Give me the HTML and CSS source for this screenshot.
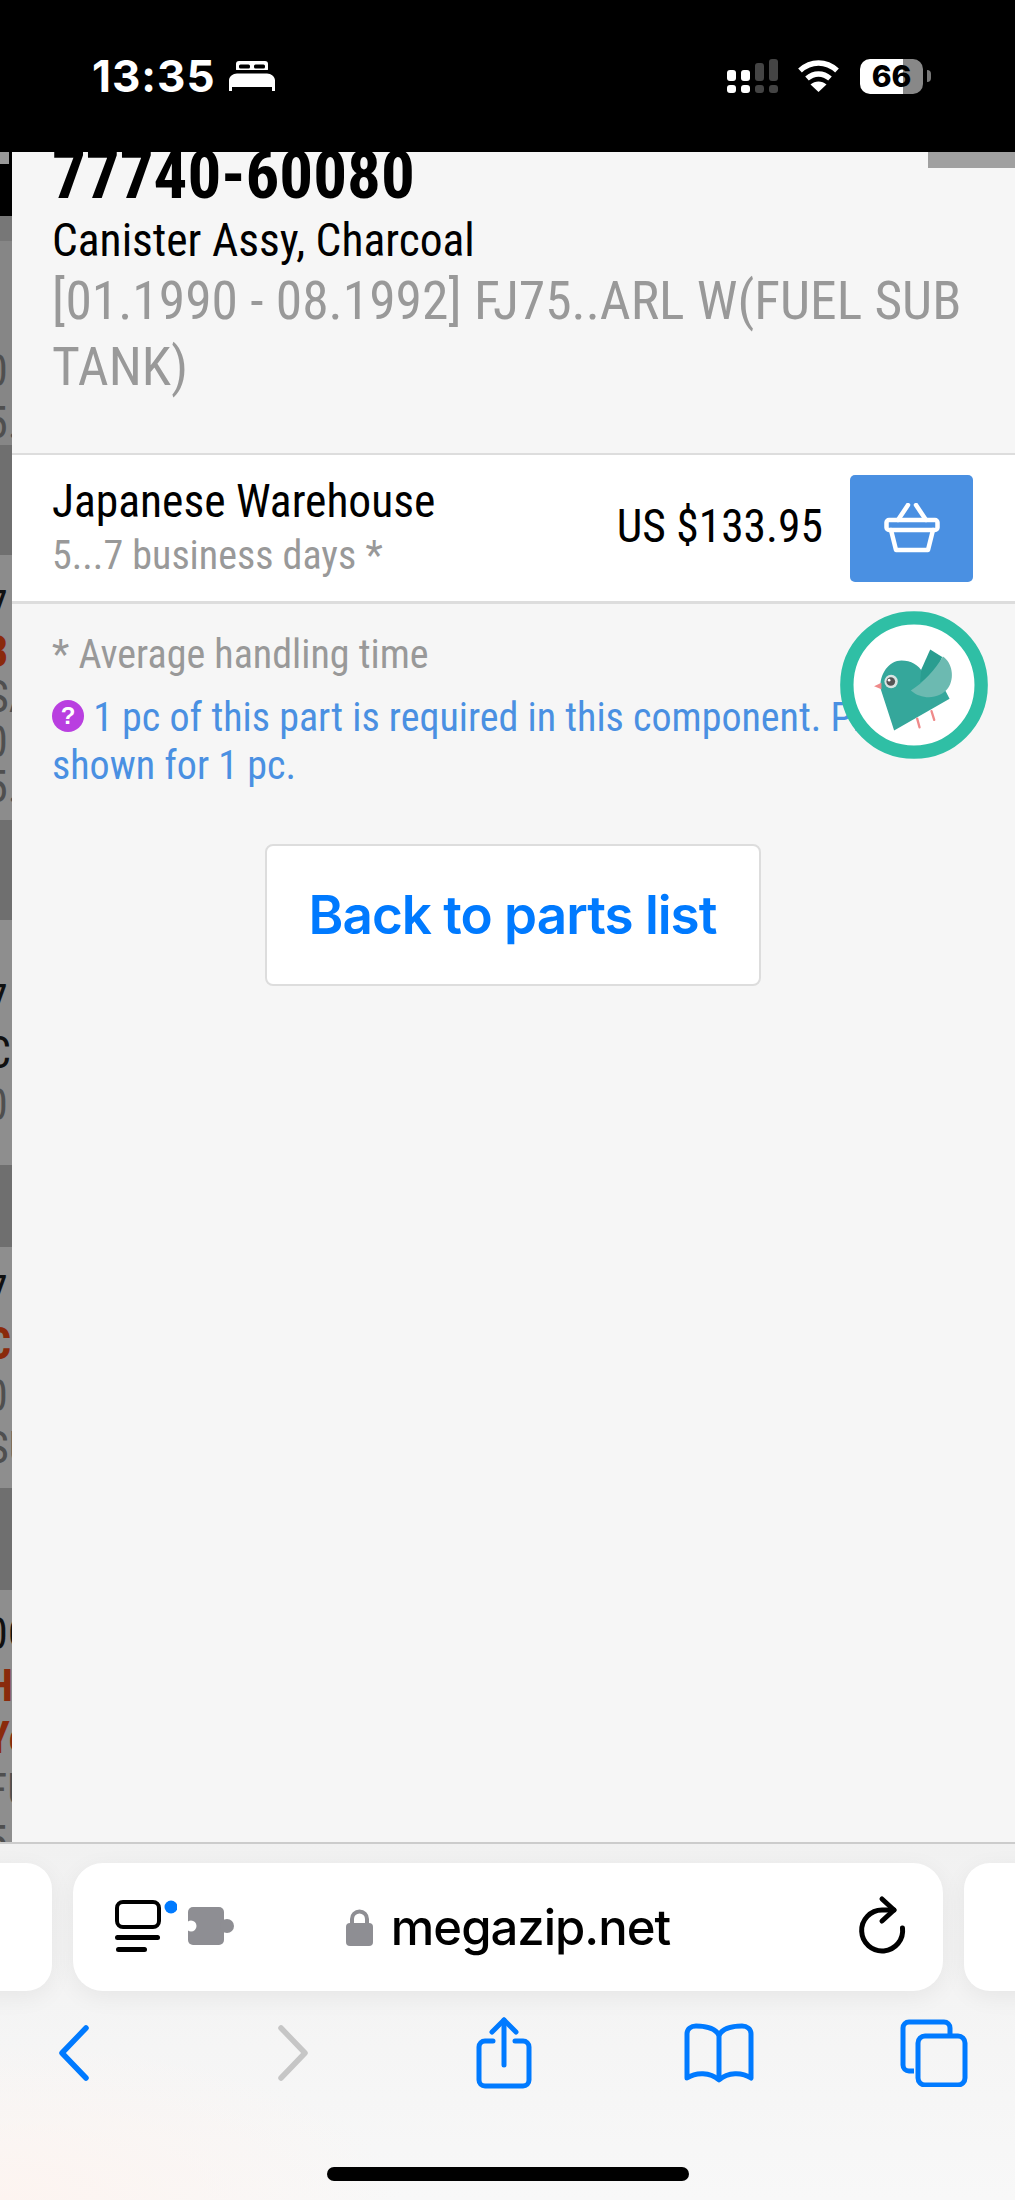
FILE: index.html
```html
<!DOCTYPE html>
<html>
<head>
  <title>megazip.net</title>
  <meta name="viewport" content="width=device-width, initial-scale=1">
  <link rel="stylesheet" href="styles.css">
</head>
<body>
  <div class="phone">
    <div class="status">
      <div class="status-left">
        <span class="clock">13:35</span>
        <svg class="bed" width="46" height="30" viewBox="0 0 46 30">
          <rect x="7" y="0" width="32" height="11" rx="3" fill="#fff"/>
          <rect x="10" y="3.500" width="11" height="4" rx="1.500" fill="#000"/>
          <rect x="25" y="3.500" width="11" height="4" rx="1.500" fill="#000"/>
          <path fill="#000" d="M7 9h32v4H7z"/>
          <path fill="#fff" d="M8 12.500h30c4 0 8 3 8 7V30h-3v-4H3v4H0V19.500c0-4 4-7 8-7z"/>
        </svg>
      </div>
      <div class="status-right">
        <svg width="52" height="36" viewBox="0 0 52 36">
          <rect x="0" y="12" width="9" height="11" rx="3" fill="#fff"/>
          <rect x="14" y="12" width="9" height="11" rx="3" fill="#fff"/>
          <rect x="28" y="5" width="9" height="18" rx="3" fill="#444"/>
          <rect x="42" y="1" width="9" height="22" rx="3" fill="#444"/>
          <rect x="0" y="27" width="9" height="8" rx="3" fill="#fff"/>
          <rect x="14" y="27" width="9" height="8" rx="3" fill="#fff"/>
          <rect x="28" y="27" width="9" height="8" rx="3" fill="#444"/>
          <rect x="42" y="27" width="9" height="8" rx="3" fill="#444"/>
        </svg>
        <svg class="wifi" width="43" height="34" viewBox="0 0 43 34">
          <path fill="none" stroke="#fff" stroke-width="5.5" d="M3 11.500C14 1.500 29 1.500 40 11.500"/>
          <path fill="none" stroke="#fff" stroke-width="5.500" d="M10 19.500C17 13.500 26 13.500 33 19.500"/>
          <path fill="#fff" d="M21.500 33L13.500 25.500C18 21.500 25 21.500 29.500 25.500z"/>
        </svg>
        <div class="battery"><span class="battery-level">66</span></div>
        <span class="battery-nib"></span>
      </div>
    </div>

    <div class="middle">
      <div class="behind">
        <div class="behind-top"><span class="behind-chip"></span></div>
        <div class="behind-row behind-row-a">
          <div class="bit bit-grey">0</div>
          <div class="bit bit-grey">5.</div>
        </div>
        <div class="behind-band behind-band-a"></div>
        <div class="behind-row behind-row-b">
          <div class="bit">7</div>
          <div class="bit bit-red">3</div>
          <div class="bit bit-grey">SA</div>
          <div class="bit bit-grey">0</div>
          <div class="bit bit-grey">5.</div>
        </div>
        <div class="behind-band behind-band-b"></div>
        <div class="behind-row behind-row-c">
          <div class="bit">7</div>
          <div class="bit">C</div>
          <div class="bit bit-grey">0</div>
        </div>
        <div class="behind-band behind-band-c"></div>
        <div class="behind-row behind-row-d">
          <div class="bit">7</div>
          <div class="bit bit-red">C</div>
          <div class="bit bit-grey">0</div>
          <div class="bit bit-grey">SU</div>
        </div>
        <div class="behind-band behind-band-d"></div>
        <div class="behind-row behind-row-e">
          <div class="bit">0C</div>
          <div class="bit bit-red">H</div>
          <div class="bit bit-red">Ye</div>
          <div class="bit bit-grey">FU</div>
          <div class="bit bit-grey">5</div>
        </div>
      </div>

      <div class="panel">
        <span class="panel-close"></span>
        <div class="part">
          <div class="part-number">77740-60080</div>
          <div class="part-name">Canister Assy, Charcoal</div>
          <div class="part-spec">[01.1990 - 08.1992] FJ75..ARL W(FUEL SUB TANK)</div>
        </div>
        <div class="offer">
          <div class="offer-info">
            <div class="offer-place">Japanese Warehouse</div>
            <div class="offer-time">5...7 business days *</div>
          </div>
          <div class="offer-price">US $133.95</div>
          <button class="offer-buy">
            <svg width="56" height="50" viewBox="0 0 56 50" fill="none" stroke="#fff" stroke-width="4.500" stroke-linejoin="round" stroke-linecap="round">
              <path d="M14 17L24 2M42 17L32 2"/>
              <rect x="2.500" y="17" width="51" height="10" rx="2.500"/>
              <path d="M7 27L12 47H44L49 27"/>
            </svg>
          </button>
        </div>
        <div class="notes">
          <div class="notes-time">* Average handling time</div>
          <div class="notes-qty">
            <svg class="notes-icon" width="32" height="32" viewBox="0 0 32 32">
              <circle cx="16" cy="16" r="16" fill="#b93fe0"/>
              <text x="16" y="24" text-anchor="middle" class="notes-mark">?</text>
            </svg>
            1 pc of this part is required in this component. Price is shown for 1 pc.
          </div>
        </div>
        <div class="back-wrap">
          <a class="back-button">Back to parts list</a>
        </div>
      </div>

      <svg class="bird" width="148" height="148" viewBox="60 62 443 443">
        <circle cx="281.500" cy="283.500" r="201" fill="#fff" stroke="#2fbfa5" stroke-width="40"/>
        <path fill="#35a79b" d="M222 420L182 296C176 250 208 210 244 210C272 210 296 224 308 246L370 290L388 325z"/>
        <path fill="#2a9d90" d="M303 238L330 177L366 200L345 250L300 275z"/>
        <path fill="#6cbab1" d="M272 300C310 276 346 236 368 198C396 216 404 262 384 292C360 326 306 330 272 300z"/>
        <circle cx="213" cy="273" r="20" fill="#d9e4e2"/>
        <circle cx="212" cy="273" r="13" fill="#555"/>
        <circle cx="207" cy="269" r="4" fill="#fff"/>
        <path fill="#ef8a8a" d="M162 287L184 277L184 296z"/>
        <path fill="none" stroke="#ef8a8a" stroke-width="7" stroke-linecap="round" d="M291 384L298 410M334 362L342 388"/>
      </svg>
    </div>

    <div class="browser">
      <div class="tabs">
        <div class="tab-peek"></div>
        <div class="address">
          <div class="address-left">
            <svg width="62" height="54" viewBox="0 0 62 54" class="reader">
              <rect x="2" y="2" width="42" height="25" rx="6" fill="none" stroke="#000" stroke-width="4"/>
              <rect x="0" y="35" width="45" height="5" rx="2.500"/>
              <rect x="1" y="47" width="31" height="5" rx="2.500"/>
              <circle cx="56" cy="7" r="6.500" fill="#007aff"/>
            </svg>
            <svg width="46" height="38" viewBox="0 0 46 38" class="puzzle">
              <rect width="36" height="38" rx="5" fill="#8e8e93"/>
              <circle cx="39" cy="19" r="7" fill="#8e8e93"/>
              <circle cx="3" cy="19" r="5.500" fill="#fff"/>
            </svg>
          </div>
          <div class="address-url">
            <svg width="27" height="38" viewBox="0 0 27 38">
              <path fill="none" stroke="#8e8e93" stroke-width="4" d="M6 17V11a7.500 7.500 0 0 1 15 0V17"/>
              <rect y="15" width="27" height="23" rx="4" fill="#8e8e93"/>
            </svg>
            <span class="url-text">megazip.net</span>
          </div>
          <div class="address-right">
            <svg class="reload" width="75" height="75" viewBox="0 0 75 75" fill="none" stroke="#000" stroke-width="5" stroke-linecap="round" stroke-linejoin="round">
              <path d="M56.500 43A20.500 20.500 0 1 1 36 25H48"/>
              <path d="M36 14L48 25L36 36"/>
            </svg>
          </div>
        </div>
        <div class="tab-peek"></div>
      </div>
      <div class="toolbar">
        <svg width="32" height="56" viewBox="0 0 32 56" fill="none" stroke="#007aff" stroke-width="5.500" stroke-linecap="round" stroke-linejoin="round">
          <path d="M28 3L4 28L28 53"/>
        </svg>
        <svg class="toolbar-forward" width="32" height="56" viewBox="0 0 32 56" fill="none" stroke="#c6c6c6" stroke-width="5.500" stroke-linecap="round" stroke-linejoin="round">
          <path d="M4 3L28 28L4 53"/>
        </svg>
        <svg width="56" height="72" viewBox="0 0 56 72" fill="none" stroke="#007aff" stroke-width="5" stroke-linecap="round" stroke-linejoin="round">
          <path d="M17 24H9a6 6 0 0 0-6 6V63a6 6 0 0 0 6 6H47a6 6 0 0 0 6-6V30a6 6 0 0 0-6-6H39"/>
          <path d="M28 48V3"/>
          <path d="M16 15L28 3L40 15"/>
        </svg>
        <svg width="70" height="60" viewBox="0 0 70 60" fill="none" stroke="#007aff" stroke-width="5" stroke-linejoin="round">
          <path d="M35 12C31 5 22 3 12 3C7 3 3 6 3 11V55C12 49 26 49 35 57C44 49 58 49 67 55V11C67 6 63 3 58 3C48 3 39 5 35 12z"/>
          <path d="M35 12V55"/>
        </svg>
        <svg width="68" height="68" viewBox="0 0 68 68" fill="none" stroke="#007aff" stroke-width="5" stroke-linejoin="round">
          <path d="M14 52H9a6 6 0 0 1-6-6V9a6 6 0 0 1 6-6H44a6 6 0 0 1 6 6V16"/>
          <rect x="18" y="17" width="47" height="49" rx="7"/>
        </svg>
      </div>
      <div class="home-bar"></div>
    </div>
  </div>
</body>
</html>
```

FILE: styles.css
```css
* {
  box-sizing: border-box;
  margin: 0;
  padding: 0;
}
body {
  font-family: "Roboto Condensed", "Liberation Sans Narrow", Roboto, sans-serif;
  font-stretch: condensed;
  background: #000;
  color: #000;
}
.phone {
  width: 1015px;
  height: 2200px;
  display: flex;
  flex-direction: column;
  overflow: hidden;
}

/* status bar */
.status {
  height: 152px;
  flex: none;
  background: #000;
  display: flex;
  justify-content: space-between;
  align-items: center;
  padding: 0 84px 0 92px;
}
.status-left {
  display: flex;
  align-items: center;
  gap: 13px;
}
.clock {
  font-family: Inter, sans-serif;
  font-stretch: normal;
  font-weight: 700;
  font-size: 44px;
  line-height: 1;
  letter-spacing: 1px;
  color: #fff;
}
.status-right {
  display: flex;
  align-items: center;
}
.wifi {
  margin-left: 18px;
}
.battery {
  width: 63px;
  height: 35px;
  margin-left: 20px;
  border-radius: 10px;
  background: linear-gradient(90deg, #fff 0, #fff 68%, #888 68%, #888 100%);
  display: flex;
  align-items: center;
  justify-content: center;
}
.battery-level {
  font-family: Inter, sans-serif;
  font-stretch: normal;
  font-weight: 800;
  font-size: 30px;
  color: #000;
}
.battery-nib {
  width: 4px;
  height: 12px;
  margin-left: 4px;
  background: #777;
  border-radius: 0 6px 6px 0;
}

/* page behind the sheet */
.middle {
  height: 1690px;
  flex: none;
  display: flex;
  position: relative;
}
.behind {
  width: 12px;
  flex: none;
  overflow: hidden;
  display: flex;
  flex-direction: column;
  background: #8a8a8a;
}
.behind-top {
  height: 64px;
  flex: none;
  background: #000;
}
.behind-chip {
  display: block;
  width: 9px;
  height: 12px;
  background: #999;
}
.behind-row {
  flex: none;
  display: flex;
  flex-direction: column;
}
.behind-band {
  flex: none;
  background: #6f6f6f;
}
.behind-row-a { height: 229px; padding-top: 129px; background: linear-gradient(#777 0, #777 25px, #868686 25px); }
.behind-band-a { height: 110px; }
.behind-row-b { height: 265px; padding-top: 30px; background: #8c8c8c; }
.behind-row-b .bit { height: 45px; line-height: 45px; }
.behind-band-b { height: 100px; }
.behind-row-c { height: 245px; padding-top: 55px; background: #8e8e8e; }
.behind-band-c { height: 82px; }
.behind-row-d { height: 241px; padding-top: 19px; background: #8e8e8e; }
.behind-band-d { height: 102px; }
.behind-row-e { flex: 1; padding-top: 18px; background: #8e8e8e; }
.bit {
  height: 52px;
  line-height: 52px;
  font-size: 44px;
  white-space: nowrap;
  color: #111;
  text-indent: -14px;
}
.bit-grey {
  color: #4f4f4f;
}
.bit-red {
  color: #8a2a0c;
  font-weight: 700;
}

/* sheet */
.panel {
  flex: 1;
  background: #f6f6f6;
  position: relative;
  overflow: hidden;
}
.panel-close {
  position: absolute;
  top: 0;
  right: 0;
  width: 87px;
  height: 16px;
  background: #a0a0a0;
}
.part {
  display: flow-root;
  height: 303px;
  padding: 0 40px;
  border-bottom: 2px solid #ddd;
}
.part-number {
  font-size: 67px;
  font-weight: 700;
  line-height: 70px;
  margin-top: -12px;
}
.part-name {
  font-size: 45.500px;
  line-height: 56px;
  margin-top: 3px;
}
.part-spec {
  font-size: 53.500px;
  line-height: 66px;
  margin-top: -1px;
  color: #999;
}
.offer {
  height: 149px;
  background: #fff;
  border-bottom: 3px solid #ddd;
  display: flex;
  align-items: center;
  padding: 0 42px 0 40px;
}
.offer-info {
  flex: 1;
}
.offer-place {
  font-size: 45.500px;
  line-height: 50px;
}
.offer-time {
  font-size: 40px;
  line-height: 48px;
  margin-top: 5px;
  color: #999;
}
.offer-price {
  font-size: 45.500px;
  margin-right: 27px;
  padding-bottom: 3px;
}
.offer-buy {
  width: 123px;
  height: 107px;
  border: 0;
  border-radius: 5px;
  background: #4a90e2;
  display: flex;
  align-items: center;
  justify-content: center;
}
.notes {
  padding: 27px 40px 0;
}
.notes-time {
  font-size: 40px;
  line-height: 48px;
  color: #999;
}
.notes-qty {
  font-size: 40px;
  line-height: 48px;
  margin-top: 15px;
  color: #4a90e2;
}
.notes-icon {
  vertical-align: -1px;
}
.notes-mark {
  font-family: "Liberation Sans", sans-serif;
  font-size: 24px;
  font-weight: 700;
  fill: #fff;
}
.back-wrap {
  display: flex;
  justify-content: center;
  margin-top: 54px;
  padding-right: 2px;
}
.back-button {
  width: 496px;
  height: 142px;
  display: flex;
  align-items: center;
  justify-content: center;
  background: #fff;
  border: 2px solid #ddd;
  border-radius: 8px;
  font-family: Inter, sans-serif;
  font-stretch: normal;
  font-size: 53px;
  font-weight: 600;
  letter-spacing: -1px;
  color: #007aff;
}
.bird {
  position: absolute;
  left: 840px;
  top: 459px;
}

/* browser chrome */
.browser {
  flex: 1;
  background-color: #f3f3f3;
  background-image: radial-gradient(ellipse 400px 160px at 0 100%, #fdf4f0, transparent), linear-gradient(#f1f1f1, #f8f8f8);
  border-top: 2px solid #ccc;
  padding-top: 19px;
}
.tabs {
  display: flex;
  gap: 21px;
  margin-left: -200px;
  width: 1500px;
}
.tab-peek {
  width: 252px;
  height: 128px;
  flex: none;
  background: #fff;
  border-radius: 26px;
  box-shadow: 0 6px 24px rgba(0,0,0,.06);
}
.address {
  width: 870px;
  height: 128px;
  flex: none;
  background: #fff;
  border-radius: 30px;
  box-shadow: 0 6px 24px rgba(0,0,0,.06);
  display: grid;
  grid-template-columns: 1fr auto 1fr;
  align-items: center;
  padding: 0 22px;
}
.address-left {
  display: flex;
  align-items: center;
  gap: 11px;
  margin-left: 20px;
}
.reader {
  fill: #000;
}
.puzzle {
  margin-top: -2px;
}
.address-url {
  display: flex;
  align-items: center;
  gap: 18px;
}
.url-text {
  font-family: Inter, sans-serif;
  font-stretch: normal;
  font-size: 49px;
  font-weight: 550;
  letter-spacing: -1px;
  color: #000;
}
.address-right {
  display: flex;
  justify-content: flex-end;
}
.reload {
  margin-top: -10px;
}
.toolbar {
  display: grid;
  grid-template-columns: repeat(5, 215px);
  justify-items: center;
  align-items: center;
  margin: 24px 0 0 -34px;
  height: 76px;
}
.toolbar-forward {
  margin-left: 8px;
}
.home-bar {
  width: 362px;
  height: 14px;
  margin: 76px 0 0 327px;
  border-radius: 7px;
  background: #000;
}
```
